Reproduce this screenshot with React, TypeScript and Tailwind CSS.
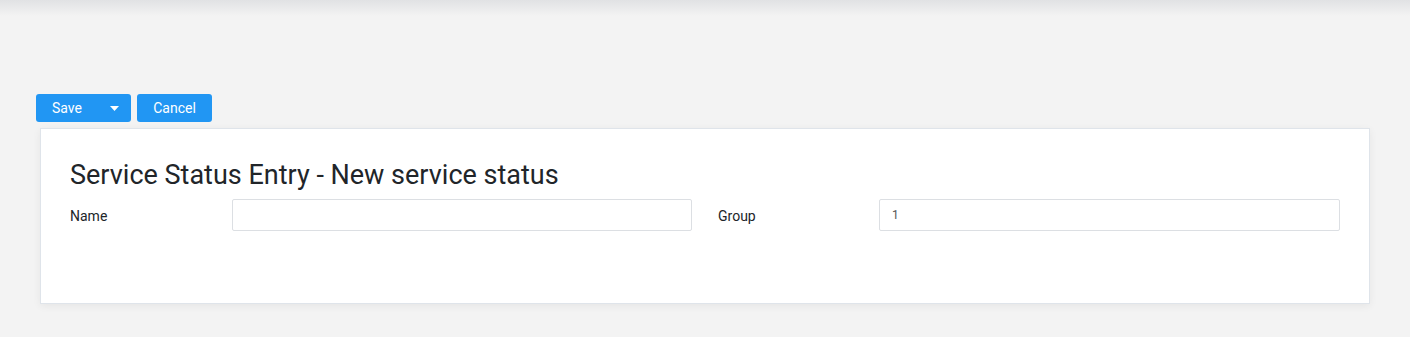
export default function App() {
  return (
    <div className="min-h-[337px] bg-[#f3f3f3] font-['Roboto',sans-serif] text-[#212529]">
      <div className="h-[16px] bg-gradient-to-b from-[#e1e2e4] to-[#f3f3f3]" />
      <div className="px-[36px] pt-[78px]">
        <div className="flex gap-[6px]">
          <div className="flex h-[28px] w-[95px] items-center rounded-[3px] bg-[#2196f3] text-[14px] text-white">
            <span className="pl-[16px]">Save</span>
            <svg className="ml-auto mr-[12px]" width="9" height="5" viewBox="0 0 9 5">
              <path d="M0 0h9L4.5 5z" fill="white" />
            </svg>
          </div>
          <div className="flex h-[28px] w-[75px] items-center justify-center rounded-[3px] bg-[#2196f3] text-[14px] text-white">
            Cancel
          </div>
        </div>
      </div>
      <div className="mx-[40px] mt-[6px] border border-[#dfe4ea] bg-white px-[29px] pb-[72px] pt-[27px] shadow-[0_2px_8px_rgba(0,0,0,0.06)]">
        <h1 className="text-[27px] leading-[38px] font-normal">Service Status Entry - New service status</h1>
        <div className="mt-[5px] grid grid-cols-2 gap-[26px]">
          <div className="flex items-center">
            <label className="w-[162px] pt-[3px] text-[14px]">Name</label>
            <input className="h-[32px] flex-1 rounded-[2px] border border-[#dcdfe3] px-[12px] text-[12px] outline-none" />
          </div>
          <div className="flex items-center">
            <label className="w-[161px] pt-[3px] text-[14px]">Group</label>
            <input
              defaultValue="1"
              className="h-[32px] flex-1 rounded-[2px] border border-[#dcdfe3] px-[12px] text-[12px] text-[#555] outline-none"
            />
          </div>
        </div>
      </div>
    </div>
  );
}
